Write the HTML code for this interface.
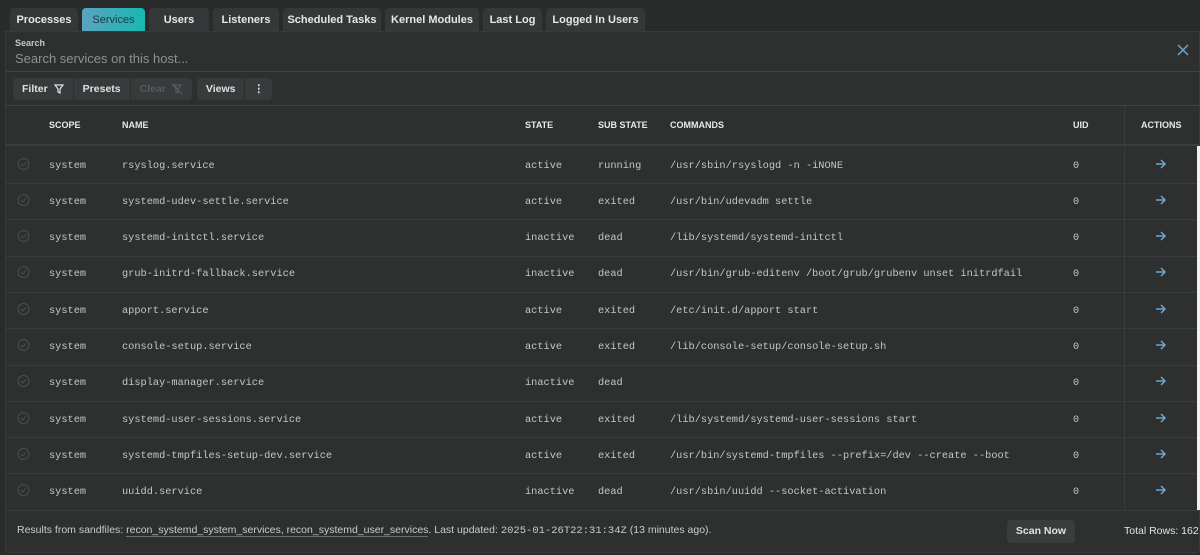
<!DOCTYPE html>
<html><head><meta charset="utf-8"><style>
*{box-sizing:border-box;margin:0;padding:0}
body{width:1200px;height:555px;background:#2a2c2c;font-family:"Liberation Sans",sans-serif;color:#d8dcdc;overflow:hidden;position:relative}
.tabs{position:absolute;top:8px;left:10px;display:flex;gap:4px}
.tab{height:23px;background:#353838;color:#e6e8e8;font-size:11px;font-weight:bold;line-height:24px;text-align:center;border-radius:4px 4px 0 0}
.tab.on{background:linear-gradient(90deg,#5aa3c0,#18b8b0);color:#1e3a40;font-weight:normal}
.panel{position:absolute;top:31px;left:5px;right:0;bottom:2px;background:#2d302f;border:1px solid #383b3b;border-radius:0 0 4px 4px}
.lbl{position:absolute;left:9px;top:6px;font-size:9px;font-weight:bold;color:#c4c8c8}
.ph{position:absolute;left:9px;top:19px;font-size:13px;color:#8c9292}
.x{position:absolute;right:10px;top:12px}
.hr{position:absolute;left:0;right:0;height:1px;background:#3f4343}
.btns{position:absolute;top:46px;left:7px;display:flex;gap:5px}
.grp{display:flex;background:#383b3b;border-radius:4px;height:22px}
.b{font-size:10.5px;font-weight:bold;line-height:22px;padding:0 9px;color:#dfe2e2;border-right:1px solid #2d302f;display:flex;align-items:center;gap:6px}
.b:last-child{border-right:none}
.row{position:absolute;left:0;right:0;height:36px;border-bottom:1px solid #393c3c;font-family:"Liberation Mono",monospace;font-size:10.3px;color:#c3c7c7}
.row span,.hd span{position:absolute;top:50%;transform:translateY(-50%);white-space:nowrap}
.hd{position:absolute;left:0;right:0;top:74px;height:40px;border-bottom:2px solid #3a3d3d;font-size:9px;font-weight:bold;color:#e8eaea}
.vl{position:absolute;left:1118px;top:74px;width:1px;height:404px;background:#3a3d3d}
.foot{position:absolute;left:11px;top:492px;font-size:10.5px;color:#c8cccc}
.foot u{text-decoration:none;border-bottom:1px solid #6a7070}
.scan{position:absolute;left:1001px;top:488px;width:68px;height:23px;background:#3a3d3d;border-radius:4px;font-size:10.5px;font-weight:bold;text-align:center;line-height:23px;color:#e2e4e4}
.tot{position:absolute;left:1118px;top:493px;font-size:10.5px;color:#e2e4e4;white-space:nowrap}
.sb{position:absolute;left:1191px;top:114px;width:4px;height:364px;background:#f0f0f0}
</style></head><body>
<div class="tabs">
<div class="tab" style="width:68px">Processes</div>
<div class="tab on" style="width:63px">Services</div>
<div class="tab" style="width:60px">Users</div>
<div class="tab" style="width:66px">Listeners</div>
<div class="tab" style="width:98px">Scheduled Tasks</div>
<div class="tab" style="width:94px">Kernel Modules</div>
<div class="tab" style="width:59px">Last Log</div>
<div class="tab" style="width:99px">Logged In Users</div>
</div>
<div class="panel">
<div class="lbl">Search</div>
<div class="ph">Search services on this host...</div>
<svg class="x" width="12" height="12" viewBox="0 0 12 12"><path d="M1 1L11 11M11 1L1 11" stroke="#6fa6cc" stroke-width="1.5"/></svg>
<div class="hr" style="top:39px"></div>
<div class="btns">
<div class="grp"><div class="b">Filter <svg width="10" height="10" viewBox="0 0 10 10"><path d="M1 1H9L6 5V9L4 8V5Z" fill="none" stroke="#dfe2e2" stroke-width="1.2"/></svg></div><div class="b">Presets</div><div class="b" style="color:#555a5a">Clear <svg width="11" height="10" viewBox="0 0 11 10"><path d="M1 1H9L6 5V9L4 8V5Z M1 0L10 10" fill="none" stroke="#555a5a" stroke-width="1.2"/></svg></div></div>
<div class="grp"><div class="b">Views</div><div class="b" style="padding:0 8px">⋮</div></div>
</div>
<div class="hr" style="top:73px"></div>
<div class="hd"><span style="left:43px">SCOPE</span><span style="left:116px">NAME</span><span style="left:519px">STATE</span><span style="left:592px">SUB STATE</span><span style="left:664px">COMMANDS</span><span style="left:1067px">UID</span><span style="left:1135px">ACTIONS</span></div>
<div class="vl"></div>
<div id="rows"></div>
<div class="sb"></div>
<div class="hr" style="top:478px;background:#393c3c"></div>
<div class="foot">Results from sandfiles: <u>recon_systemd_system_services, recon_systemd_user_services</u>. Last updated: <span style="font-family:'Liberation Mono',monospace">2025-01-26T22:31:34Z</span> (13 minutes ago).</div>
<div class="scan">Scan Now</div>
<div class="tot">Total Rows: 162</div>
</div>
<script>
var d=[["rsyslog.service","active","running","/usr/sbin/rsyslogd -n -iNONE"],["systemd-udev-settle.service","active","exited","/usr/bin/udevadm settle"],["systemd-initctl.service","inactive","dead","/lib/systemd/systemd-initctl"],["grub-initrd-fallback.service","inactive","dead","/usr/bin/grub-editenv /boot/grub/grubenv unset initrdfail"],["apport.service","active","exited","/etc/init.d/apport start"],["console-setup.service","active","exited","/lib/console-setup/console-setup.sh"],["display-manager.service","inactive","dead",""],["systemd-user-sessions.service","active","exited","/lib/systemd/systemd-user-sessions start"],["systemd-tmpfiles-setup-dev.service","active","exited","/usr/bin/systemd-tmpfiles --prefix=/dev --create --boot"],["uuidd.service","inactive","dead","/usr/sbin/uuidd --socket-activation"]];
var h="";d.forEach(function(r,i){var t=116+i*36.3;h+='<div class="row" style="top:'+t+'px"><span style="left:11px"><svg width="13" height="13" viewBox="0 0 13 13"><circle cx="6.5" cy="6.5" r="5.5" fill="none" stroke="#4a5050" stroke-width="1"/><path d="M4 6.7L5.8 8.4L9 4.8" fill="none" stroke="#4a5050" stroke-width="1"/></svg></span><span style="left:43px">system</span><span style="left:116px">'+r[0]+'</span><span style="left:519px">'+r[1]+'</span><span style="left:592px">'+r[2]+'</span><span style="left:664px">'+r[3]+'</span><span style="left:1067px">0</span><span style="left:1149px"><svg width="12" height="10" viewBox="0 0 12 10"><path d="M1 5H10M6 1L10 5L6 9" fill="none" stroke="#6fa6cc" stroke-width="1.5"/></svg></span></div>';});
document.getElementById("rows").innerHTML=h;
</script>
</body></html>
